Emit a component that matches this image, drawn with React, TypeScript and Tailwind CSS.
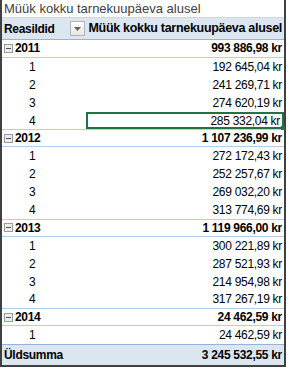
type Year = {
  year: string
  total: string
  quarters: string[]
}

const data: Year[] = [
  { year: "2011", total: "993 886,98 kr", quarters: ["192 645,04 kr", "241 269,71 kr", "274 620,19 kr", "285 332,04 kr"] },
  { year: "2012", total: "1 107 236,99 kr", quarters: ["272 172,43 kr", "252 257,67 kr", "269 032,20 kr", "313 774,69 kr"] },
  { year: "2013", total: "1 119 966,00 kr", quarters: ["300 221,89 kr", "287 521,93 kr", "214 954,98 kr", "317 267,19 kr"] },
  { year: "2014", total: "24 462,59 kr", quarters: ["24 462,59 kr"] },
]

function MinusBox() {
  return (
    <span className="mr-[2px] flex h-[9px] w-[9px] items-center justify-center border border-[#9a9a9a] bg-[#ececec]">
      <span className="h-px w-[5px] bg-[#505050]" />
    </span>
  )
}

function FilterButton() {
  return (
    <span className="flex h-[15px] w-[15px] items-center justify-center border border-[#b4b4b4] bg-gradient-to-b from-white to-[#e6e6e6]">
      <svg width="7" height="4" viewBox="0 0 7 4">
        <path d="M0 0 H7 L3.5 4 Z" fill="#606060" />
      </svg>
    </span>
  )
}

export default function App() {
  return (
    <div
      className="flex h-[367px] w-[286px] flex-col border-x-2 border-b-2 border-[#404040] bg-white text-[12px] leading-none text-black tracking-[-0.3px]"
      style={{ fontFamily: '"Liberation Sans", Arial, sans-serif' }}
    >
      <div className="flex h-[18px] items-center border-b border-[#d4d4d4] pl-[2px] text-[13px] tracking-normal text-[#404040]">
        Müük kokku tarnekuupäeva alusel
      </div>

      <div className="flex h-[22px] items-center border-b border-[#95b3d7] bg-[#dce6f1] font-bold">
        <div className="flex w-[84px] items-center justify-between pl-[2px] pr-[1px]">
          <span>Reasildid</span>
          <FilterButton />
        </div>
        <div className="flex-1 pr-[2px] text-right text-[12.5px]">Müük kokku tarnekuupäeva alusel</div>
      </div>

      {data.map((y, yi) => (
        <div key={y.year}>
          <div
            className={`flex h-[17.9px] items-center border-b border-[#b8cce4] font-bold ${yi > 0 ? "border-t" : ""}`}
          >
            <div className="flex w-[84px] items-center pl-[2px]">
              <MinusBox />
              <span>{y.year}</span>
            </div>
            <div className="flex-1 pr-[2px] text-right">{y.total}</div>
          </div>
          {y.quarters.map((q, qi) => {
            const selected = yi === 0 && qi === 3
            return (
              <div key={qi} className="flex h-[17.9px] items-center">
                <div className="w-[84px] pl-[27px]">{qi + 1}</div>
                <div
                  className={`relative flex h-full flex-1 items-center justify-end pr-[2px] ${
                    selected ? "border-2 border-[#217346]" : ""
                  }`}
                >
                  {q}
                  {selected && (
                    <span className="absolute -bottom-[3px] -right-[3px] h-[4px] w-[4px] bg-[#217346]" />
                  )}
                </div>
              </div>
            )
          })}
        </div>
      ))}

      <div className="flex flex-1 items-center border-t border-[#95b3d7] bg-[#dce6f1] font-bold">
        <div className="w-[84px] pl-[2px]">Üldsumma</div>
        <div className="flex-1 pr-[2px] text-right">3 245 532,55 kr</div>
      </div>
    </div>
  )
}
